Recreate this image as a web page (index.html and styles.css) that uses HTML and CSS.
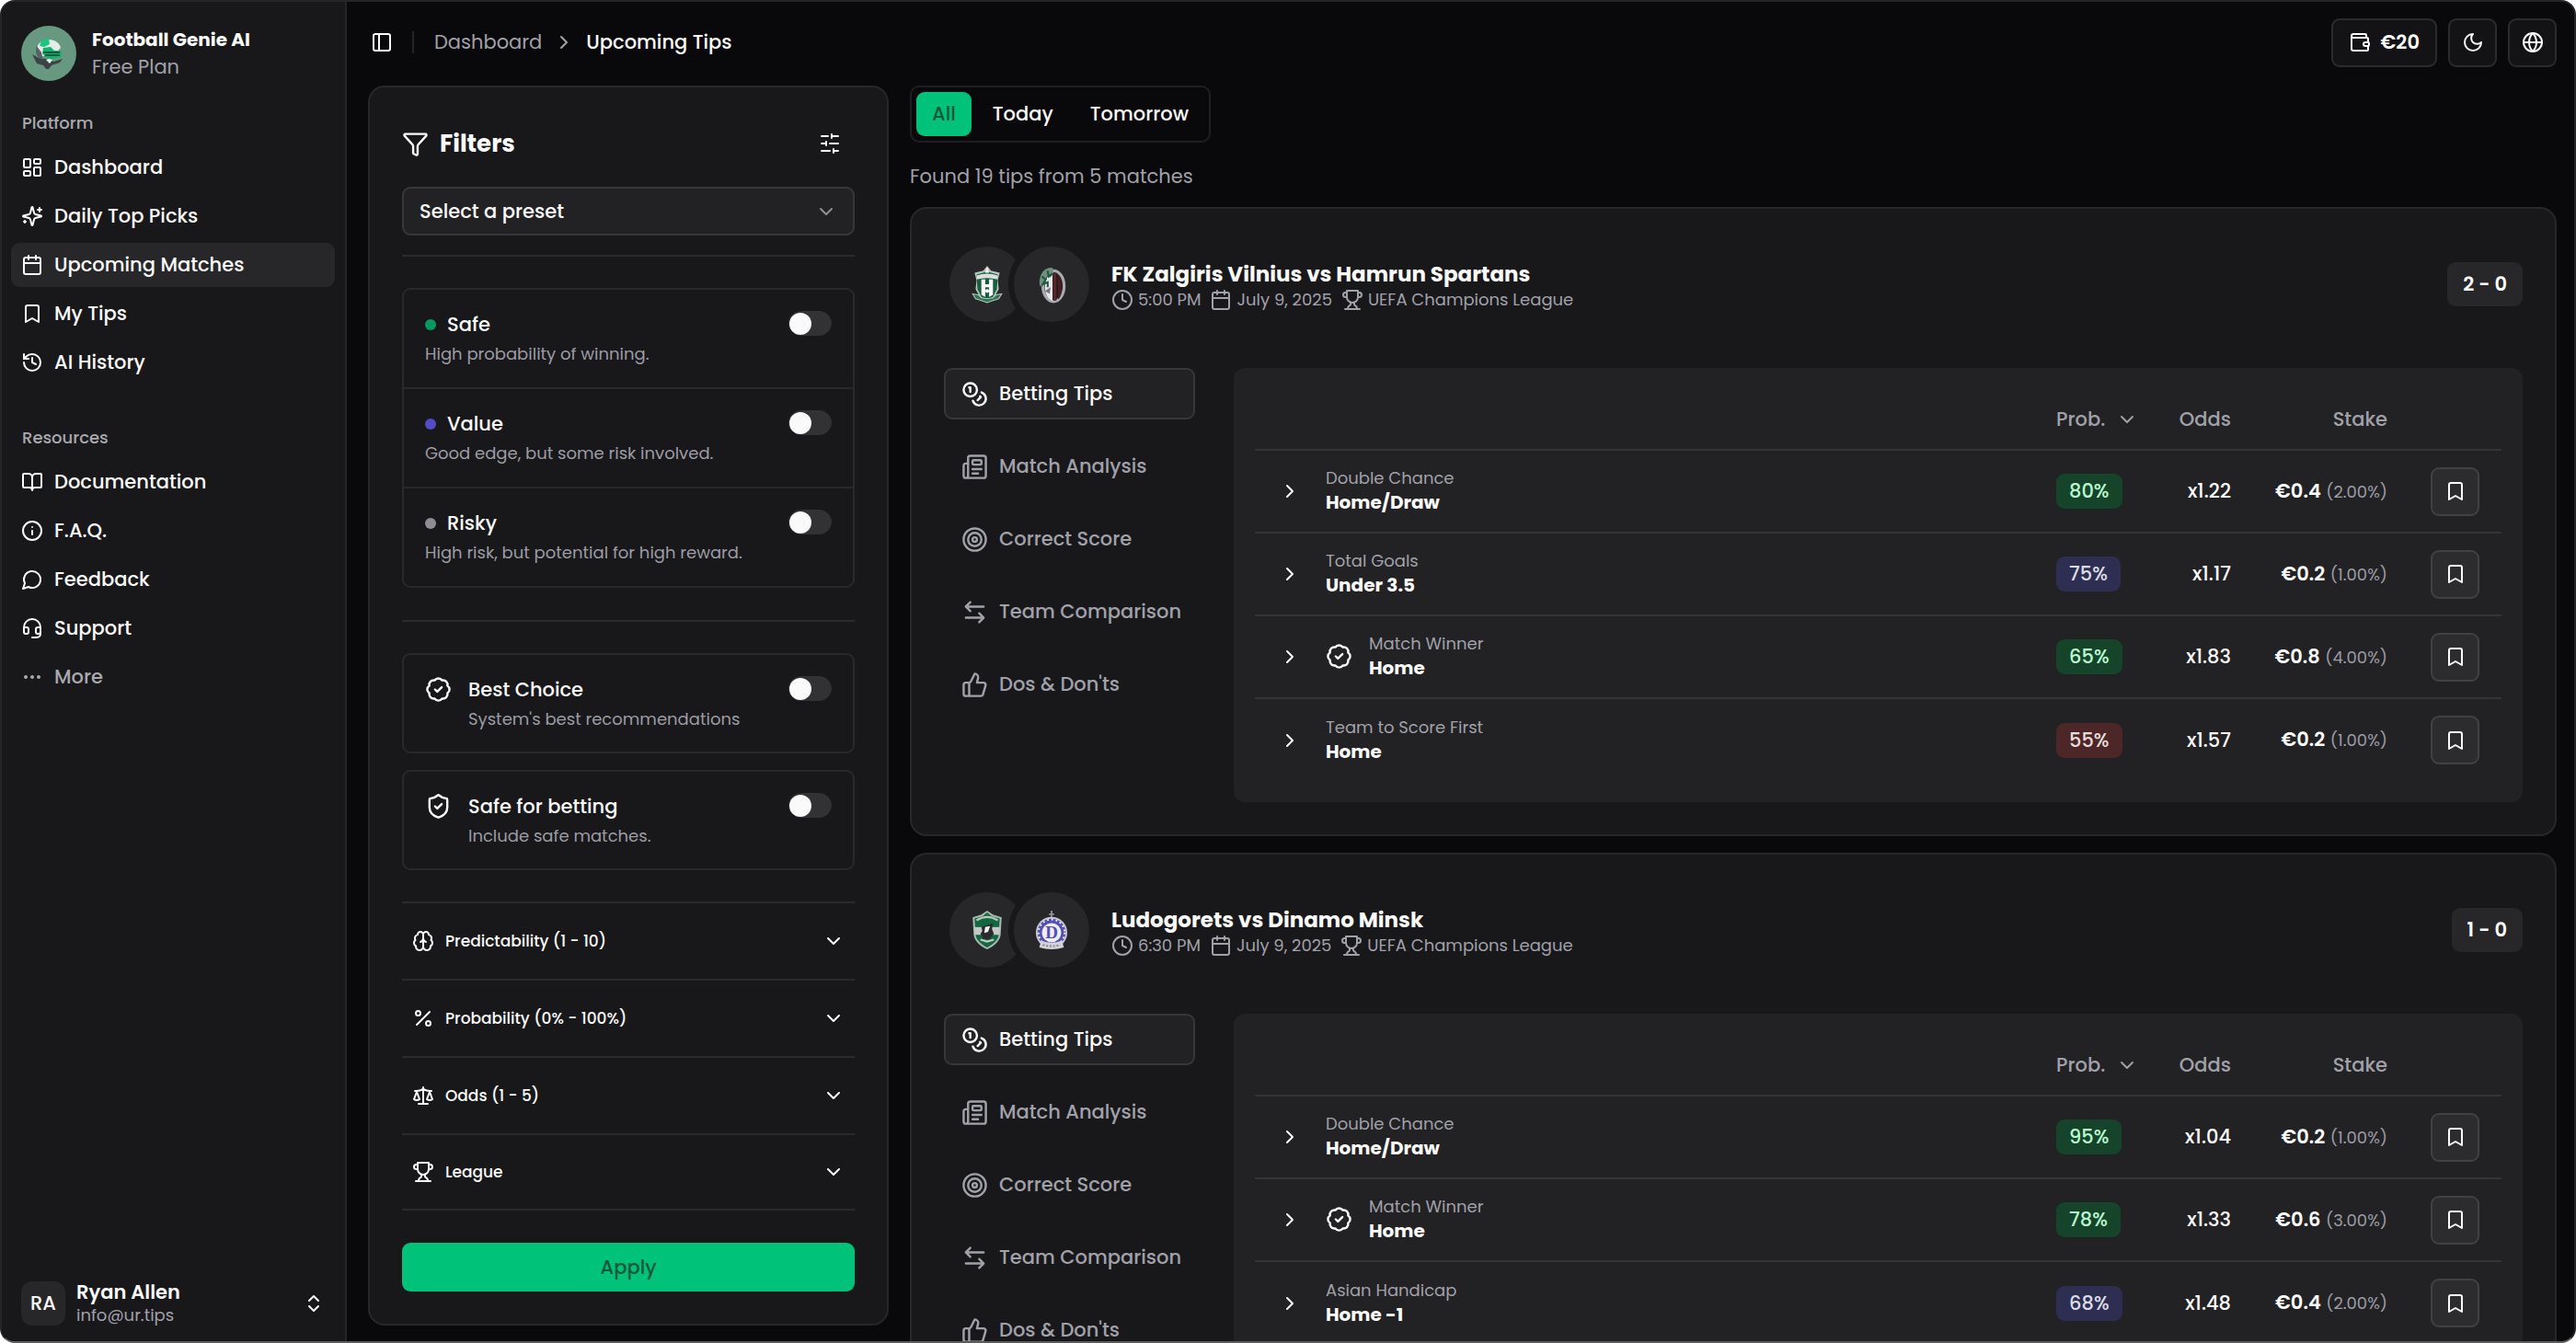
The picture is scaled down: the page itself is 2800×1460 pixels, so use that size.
FILE: index.html
```html
<!DOCTYPE html>
<html lang="en">
<head>
  <meta charset="UTF-8">
  <meta name="viewport" content="width=device-width, initial-scale=1.0">
  <title>Upcoming Tips — Football Genie AI</title>
  <link rel="stylesheet" href="styles.css">
</head>
<body>
  <!-- icon sprite -->
  <svg class="sprite" aria-hidden="true">
    <symbol id="panel" viewBox="0 0 24 24"><rect x="3" y="3" width="18" height="18" rx="2"/><path d="M9 3v18"/></symbol>
    <symbol id="dashboard" viewBox="0 0 24 24"><rect x="3" y="3" width="7" height="9" rx="1"/><rect x="14" y="3" width="7" height="5" rx="1"/><rect x="14" y="12" width="7" height="9" rx="1"/><rect x="3" y="16" width="7" height="5" rx="1"/></symbol>
    <symbol id="sparkles" viewBox="0 0 24 24"><path d="M9.937 15.5A2 2 0 0 0 8.5 14.063l-6.135-1.582a.5.5 0 0 1 0-.962L8.5 9.936A2 2 0 0 0 9.937 8.5l1.582-6.135a.5.5 0 0 1 .963 0L14.063 8.5A2 2 0 0 0 15.5 9.937l6.135 1.581a.5.5 0 0 1 0 .964L15.5 14.063a2 2 0 0 0-1.437 1.437l-1.582 6.135a.5.5 0 0 1-.963 0z"/><path d="M20 3v4M22 5h-4M4 17v2M5 18H3"/></symbol>
    <symbol id="calendar" viewBox="0 0 24 24"><path d="M8 2v4M16 2v4M3 10h18"/><rect x="3" y="4" width="18" height="18" rx="2"/></symbol>
    <symbol id="bookmark" viewBox="0 0 24 24"><path d="m19 21-7-4-7 4V5a2 2 0 0 1 2-2h10a2 2 0 0 1 2 2v16z"/></symbol>
    <symbol id="history" viewBox="0 0 24 24"><path d="M3 12a9 9 0 1 0 9-9 9.75 9.75 0 0 0-6.74 2.74L3 8"/><path d="M3 3v5h5M12 7v5l4 2"/></symbol>
    <symbol id="book" viewBox="0 0 24 24"><path d="M12 7v14M3 18a1 1 0 0 1-1-1V4a1 1 0 0 1 1-1h5a4 4 0 0 1 4 4 4 4 0 0 1 4-4h5a1 1 0 0 1 1 1v13a1 1 0 0 1-1 1h-6a3 3 0 0 0-3 3 3 3 0 0 0-3-3z"/></symbol>
    <symbol id="info" viewBox="0 0 24 24"><circle cx="12" cy="12" r="10"/><path d="M12 16v-4M12 8h.01"/></symbol>
    <symbol id="message" viewBox="0 0 24 24"><path d="M7.9 20A9 9 0 1 0 4 16.1L2 22Z"/></symbol>
    <symbol id="headset" viewBox="0 0 24 24"><path d="M3 11h3a2 2 0 0 1 2 2v3a2 2 0 0 1-2 2H5a2 2 0 0 1-2-2v-5Zm0 0a9 9 0 1 1 18 0m0 0v5a2 2 0 0 1-2 2h-1a2 2 0 0 1-2-2v-3a2 2 0 0 1 2-2h3Z"/><path d="M21 16v2a4 4 0 0 1-4 4h-5"/></symbol>
    <symbol id="dots" viewBox="0 0 24 24"><circle cx="5" cy="12" r="1"/><circle cx="12" cy="12" r="1"/><circle cx="19" cy="12" r="1"/></symbol>
    <symbol id="updown" viewBox="0 0 24 24"><path d="m7 15 5 5 5-5M7 9l5-5 5 5"/></symbol>
    <symbol id="right" viewBox="0 0 24 24"><path d="m9 18 6-6-6-6"/></symbol>
    <symbol id="down" viewBox="0 0 24 24"><path d="m6 9 6 6 6-6"/></symbol>
    <symbol id="wallet" viewBox="0 0 24 24"><path d="M19 7V4a1 1 0 0 0-1-1H5a2 2 0 0 0 0 4h15a1 1 0 0 1 1 1v4h-3a2 2 0 0 0 0 4h3a1 1 0 0 0 1-1v-2a1 1 0 0 0-1-1"/><path d="M3 5v14a2 2 0 0 0 2 2h15a1 1 0 0 0 1-1v-4"/></symbol>
    <symbol id="moon" viewBox="0 0 24 24"><path d="M12 3a6 6 0 0 0 9 9 9 9 0 1 1-9-9Z"/></symbol>
    <symbol id="globe" viewBox="0 0 24 24"><circle cx="12" cy="12" r="10"/><path d="M12 2a14.5 14.5 0 0 0 0 20 14.5 14.5 0 0 0 0-20M2 12h20"/></symbol>
    <symbol id="funnel" viewBox="0 0 24 24"><path d="M10 20a1 1 0 0 0 .553.895l2 1A1 1 0 0 0 14 21v-7a2 2 0 0 1 .517-1.341L21.74 4.67A1 1 0 0 0 21 3H3a1 1 0 0 0-.742 1.67l7.225 7.989A2 2 0 0 1 10 14z"/></symbol>
    <symbol id="sliders" viewBox="0 0 24 24"><path d="M21 4h-7M10 4H3M21 12h-9M8 12H3M21 20h-5M12 20H3M14 2v4M8 10v4M16 18v4"/></symbol>
    <symbol id="badge" viewBox="0 0 24 24"><path d="M3.85 8.62a4 4 0 0 1 4.78-4.77 4 4 0 0 1 6.74 0 4 4 0 0 1 4.78 4.78 4 4 0 0 1 0 6.74 4 4 0 0 1-4.77 4.78 4 4 0 0 1-6.75 0 4 4 0 0 1-4.78-4.77 4 4 0 0 1 0-6.76Z"/><path d="m9 12 2 2 4-4"/></symbol>
    <symbol id="shield" viewBox="0 0 24 24"><path d="M20 13c0 5-3.5 7.5-7.66 8.95a1 1 0 0 1-.67-.01C7.5 20.5 4 18 4 13V6a1 1 0 0 1 1-1c2 0 4.5-1.2 6.24-2.72a1.17 1.17 0 0 1 1.52 0C14.51 3.81 17 5 19 5a1 1 0 0 1 1 1z"/><path d="m9 12 2 2 4-4"/></symbol>
    <symbol id="brain" viewBox="0 0 24 24"><path d="M12 5a3 3 0 1 0-5.997.125 4 4 0 0 0-2.526 5.77 4 4 0 0 0 .556 6.588A4 4 0 1 0 12 18Z"/><path d="M12 5a3 3 0 1 1 5.997.125 4 4 0 0 1 2.526 5.77 4 4 0 0 1-.556 6.588A4 4 0 1 1 12 18Z"/><path d="M15 13a4.5 4.5 0 0 1-3-4 4.5 4.5 0 0 1-3 4"/></symbol>
    <symbol id="percent" viewBox="0 0 24 24"><path d="M19 5 5 19"/><circle cx="6.5" cy="6.5" r="2.5"/><circle cx="17.5" cy="17.5" r="2.5"/></symbol>
    <symbol id="scale" viewBox="0 0 24 24"><path d="m16 16 3-8 3 8c-.87.65-1.92 1-3 1s-2.13-.35-3-1ZM2 16l3-8 3 8c-.87.65-1.92 1-3 1s-2.13-.35-3-1ZM7 21h10M12 3v18M3 7h2c2 0 5-1 7-2 2 1 5 2 7 2h2"/></symbol>
    <symbol id="trophy" viewBox="0 0 24 24"><path d="M6 9H4.5a2.5 2.5 0 0 1 0-5H6M18 9h1.5a2.5 2.5 0 0 0 0-5H18M4 22h16M10 14.66V17c0 .55-.47.98-.97 1.21C7.85 18.75 7 20.24 7 22M14 14.66V17c0 .55.47.98.97 1.21C16.15 18.75 17 20.24 17 22M18 2H6v7a6 6 0 0 0 12 0V2Z"/></symbol>
    <symbol id="clock" viewBox="0 0 24 24"><circle cx="12" cy="12" r="10"/><path d="M12 6v6l4 2"/></symbol>
    <symbol id="coins" viewBox="0 0 24 24"><circle cx="8" cy="8" r="6"/><path d="M18.09 10.37A6 6 0 1 1 10.34 18M7 6h1v4M16.71 13.88l.7.71-2.82 2.82"/></symbol>
    <symbol id="news" viewBox="0 0 24 24"><path d="M15 18h-5M18 14h-8M4 22h16a2 2 0 0 0 2-2V4a2 2 0 0 0-2-2H8a2 2 0 0 0-2 2v16a2 2 0 0 1-4 0v-9a2 2 0 0 1 2-2h2"/><rect x="10" y="6" width="8" height="4" rx="1"/></symbol>
    <symbol id="target" viewBox="0 0 24 24"><circle cx="12" cy="12" r="10"/><circle cx="12" cy="12" r="6"/><circle cx="12" cy="12" r="2"/></symbol>
    <symbol id="compare" viewBox="0 0 24 24"><path d="M8 3 4 7l4 4M4 7h16M16 21l4-4-4-4M20 17H4"/></symbol>
    <symbol id="thumb" viewBox="0 0 24 24"><path d="M7 10v12M15 5.88 14 10h5.83a2 2 0 0 1 1.92 2.56l-2.33 8A2 2 0 0 1 17.5 22H4a2 2 0 0 1-2-2v-8a2 2 0 0 1 2-2h2.76a2 2 0 0 0 1.79-1.11L12 2a3.13 3.13 0 0 1 3 3.88Z"/></symbol>
  </svg>

  <div class="app">
    <aside class="sidebar">
      <div class="brand">
        <svg class="brand-logo" viewBox="0 0 60 60" aria-hidden="true">
          <circle cx="30" cy="30" r="30" fill="#679880"/>
          <path d="M17 29c-1-9 5-14 13-14 7 0 12 4 13 9l-3 3H27l-2 6-6 1z" fill="#e7ebea"/>
          <path d="M22 16l8-2 1 6-6 3-5-1z" fill="#18c97d"/>
          <path d="M24 24l8-1 4 4 8 1v6l-9 2-8-1-4-5z" fill="#0fb56e"/>
          <path d="M12 31l7 4 8 1 8 3 10-3-3 4-9 3-3 4h-3l-3-4-7-2z" fill="#3c4246"/>
          <path d="M17 22c-2 5-1 9 2 13l5 2-2-8z" fill="#596266"/>
          <path d="M24 29h18M26 32h16" stroke="#1d3a31" stroke-width="1.5"/>
          <path d="M27 37l3-1 4 1-3 4z" fill="#f1f3f2"/>
        </svg>
        <div class="brand-text">
          <span class="brand-name">Football Genie AI</span>
          <span class="brand-plan">Free Plan</span>
        </div>
      </div>

      <nav class="nav">
        <h2 class="nav-title">Platform</h2>
        <a class="nav-item" href="#"><svg class="icon"><use href="#dashboard"/></svg>Dashboard</a>
        <a class="nav-item" href="#"><svg class="icon"><use href="#sparkles"/></svg>Daily Top Picks</a>
        <a class="nav-item active" href="#"><svg class="icon"><use href="#calendar"/></svg>Upcoming Matches</a>
        <a class="nav-item" href="#"><svg class="icon"><use href="#bookmark"/></svg>My Tips</a>
        <a class="nav-item" href="#"><svg class="icon"><use href="#history"/></svg>AI History</a>
      </nav>

      <nav class="nav">
        <h2 class="nav-title">Resources</h2>
        <a class="nav-item" href="#"><svg class="icon"><use href="#book"/></svg>Documentation</a>
        <a class="nav-item" href="#"><svg class="icon"><use href="#info"/></svg>F.A.Q.</a>
        <a class="nav-item" href="#"><svg class="icon"><use href="#message"/></svg>Feedback</a>
        <a class="nav-item" href="#"><svg class="icon"><use href="#headset"/></svg>Support</a>
        <button class="nav-item muted" type="button"><svg class="icon"><use href="#dots"/></svg>More</button>
      </nav>

      <button class="user" type="button">
        <span class="user-avatar">RA</span>
        <span class="user-text">
          <span class="user-name">Ryan Allen</span>
          <span class="user-mail">info@ur.tips</span>
        </span>
        <svg class="icon"><use href="#updown"/></svg>
      </button>
    </aside>

    <main class="main">
      <header class="topbar">
        <button class="ghost" type="button" aria-label="Toggle sidebar"><svg class="icon"><use href="#panel"/></svg></button>
        <span class="topbar-sep"></span>
        <nav class="crumbs" aria-label="Breadcrumb">
          <a href="#">Dashboard</a>
          <svg class="icon"><use href="#right"/></svg>
          <span class="crumb-current">Upcoming Tips</span>
        </nav>
        <div class="topbar-actions">
          <button class="outline wallet" type="button"><svg class="icon"><use href="#wallet"/></svg>€20</button>
          <button class="outline square" type="button" aria-label="Theme"><svg class="icon"><use href="#moon"/></svg></button>
          <button class="outline square" type="button" aria-label="Language"><svg class="icon"><use href="#globe"/></svg></button>
        </div>
      </header>

      <div class="content">
        <form class="filters">
          <div class="filters-head">
            <svg class="icon-lg"><use href="#funnel"/></svg>
            <h1>Filters</h1>
            <button class="ghost" type="button" aria-label="Manage presets"><svg class="icon"><use href="#sliders"/></svg></button>
          </div>
          <div class="preset">
            <select aria-label="Preset">
              <option>Select a preset</option>
            </select>
            <svg class="icon"><use href="#down"/></svg>
          </div>
          <hr>
          <div class="box">
            <div class="option">
              <label for="safe"><span class="option-title"><i class="dot dot-safe"></i>Safe</span><small>High probability of winning.</small></label>
              <input class="switch" type="checkbox" id="safe">
            </div>
            <div class="option">
              <label for="value"><span class="option-title"><i class="dot dot-value"></i>Value</span><small>Good edge, but some risk involved.</small></label>
              <input class="switch" type="checkbox" id="value">
            </div>
            <div class="option">
              <label for="risky"><span class="option-title"><i class="dot dot-risky"></i>Risky</span><small>High risk, but potential for high reward.</small></label>
              <input class="switch" type="checkbox" id="risky">
            </div>
          </div>
          <hr>
          <div class="boxes">
            <div class="box">
              <div class="option">
                <svg class="icon-lg"><use href="#badge"/></svg>
                <label for="best"><span class="option-title">Best Choice</span><small>System's best recommendations</small></label>
                <input class="switch" type="checkbox" id="best">
              </div>
            </div>
            <div class="box">
              <div class="option">
                <svg class="icon-lg"><use href="#shield"/></svg>
                <label for="safebet"><span class="option-title">Safe for betting</span><small>Include safe matches.</small></label>
                <input class="switch" type="checkbox" id="safebet">
              </div>
            </div>
          </div>
          <div class="accordion">
            <button type="button"><svg class="icon"><use href="#brain"/></svg>Predictability (1 - 10)<svg class="icon caret"><use href="#down"/></svg></button>
            <button type="button"><svg class="icon"><use href="#percent"/></svg>Probability (0% - 100%)<svg class="icon caret"><use href="#down"/></svg></button>
            <button type="button"><svg class="icon"><use href="#scale"/></svg>Odds (1 - 5)<svg class="icon caret"><use href="#down"/></svg></button>
            <button type="button"><svg class="icon"><use href="#trophy"/></svg>League<svg class="icon caret"><use href="#down"/></svg></button>
          </div>
          <button class="apply" type="submit">Apply</button>
        </form>

        <section class="results">
          <div class="days">
            <button class="day active" type="button">All</button>
            <button class="day" type="button">Today</button>
            <button class="day" type="button">Tomorrow</button>
          </div>
          <p class="found">Found 19 tips from 5 matches</p>

          <article class="match">
            <header class="match-head">
              <div class="teams">
                <span class="team">
                  <svg viewBox="0 0 32 40" aria-hidden="true">
                    <path d="M16 1l4 5 9 2-2 8 1 9-5 9-7 5-7-5-5-9 1-9-2-8 9-2z" fill="#b9c4c0"/>
                    <path d="M16 7l11 3-1 15-4 8-6 4-6-4-4-8L5 10z" fill="#15603c"/>
                    <path d="M5 11q11-4 22 0v4q-11-3-22 0z" fill="#d9e0dd"/>
                    <path d="M16 2l2 6h-4z" fill="#fff"/>
                    <path d="M10 15h4v18l-4-2zM18 15h4v16l-4 2zM14 20h4v3h-4z" fill="#fff"/>
                    <circle cx="16" cy="27" r="2" fill="#fff"/>
                    <path d="M1 30l6 1 3 3 6 1 6-1 3-3 6-1-3 5-6 2-6 2-6-2-6-2z" fill="#2d7452" stroke="#b9c4c0"/>
                  </svg>
                </span>
                <span class="team">
                  <svg viewBox="0 0 32 40" aria-hidden="true">
                    <ellipse cx="18" cy="22" rx="11" ry="16" fill="#1c1c1f" stroke="#aaaab0" stroke-width="3"/>
                    <path d="M17 8v29c-5-1-8-8-8-14 0-8 3-13 8-15z" fill="#e8e8ea"/>
                    <path d="M18 8h3v29h-3z" fill="#5d2427"/>
                    <path d="M22 9c5 4 7 20 1 27z" fill="#471d20"/>
                    <path d="M17 3C8 2 2 11 4 22l3 1c0-6 2-10 5-12l3 2 3-5z" fill="#6f8f80"/>
                    <path d="M6 12l4 3-3 5 5-2v5M12 6l1 6 4-3" stroke="#1f5a3d" stroke-width="2" fill="none"/>
                    <path d="M9 27l6-4-1 7z" fill="#77777d"/>
                  </svg>
                </span>
              </div>
              <div class="match-info">
                <h2>FK Zalgiris Vilnius vs Hamrun Spartans</h2>
                <ul>
                  <li><svg class="icon"><use href="#clock"/></svg>5:00 PM</li>
                  <li><svg class="icon"><use href="#calendar"/></svg>July 9, 2025</li>
                  <li><svg class="icon"><use href="#trophy"/></svg>UEFA Champions League</li>
                </ul>
              </div>
              <span class="score">2 - 0</span>
            </header>
            <div class="match-body">
              <div class="tabs">
                <button class="tab active" type="button"><svg class="icon-lg"><use href="#coins"/></svg>Betting Tips</button>
                <button class="tab" type="button"><svg class="icon-lg"><use href="#news"/></svg>Match Analysis</button>
                <button class="tab" type="button"><svg class="icon-lg"><use href="#target"/></svg>Correct Score</button>
                <button class="tab" type="button"><svg class="icon-lg"><use href="#compare"/></svg>Team Comparison</button>
                <button class="tab" type="button"><svg class="icon-lg"><use href="#thumb"/></svg>Dos &amp; Don'ts</button>
              </div>
              <div class="panel">
                <table class="tips">
                  <thead>
                    <tr>
                      <th class="c-open"></th>
                      <th class="c-name"></th>
                      <th class="c-prob"><button class="sort" type="button">Prob.<svg class="icon"><use href="#down"/></svg></button></th>
                      <th class="c-odds">Odds</th>
                      <th class="c-stake">Stake</th>
                      <th class="c-save"></th>
                    </tr>
                  </thead>
                  <tbody>
                    <tr>
                      <td class="c-open"><button class="ghost" type="button" aria-label="Expand"><svg class="icon"><use href="#right"/></svg></button></td>
                      <td class="c-name"><div class="tip"><div><span>Double Chance</span><strong>Home/Draw</strong></div></div></td>
                      <td><span class="prob prob-high">80%</span></td>
                      <td class="c-odds">x1.22</td>
                      <td class="c-stake"><b>€0.4</b> <small>(2.00%)</small></td>
                      <td class="c-save"><button class="save" type="button" aria-label="Save tip"><svg class="icon"><use href="#bookmark"/></svg></button></td>
                    </tr>
                    <tr>
                      <td class="c-open"><button class="ghost" type="button" aria-label="Expand"><svg class="icon"><use href="#right"/></svg></button></td>
                      <td class="c-name"><div class="tip"><div><span>Total Goals</span><strong>Under 3.5</strong></div></div></td>
                      <td><span class="prob prob-mid">75%</span></td>
                      <td class="c-odds">x1.17</td>
                      <td class="c-stake"><b>€0.2</b> <small>(1.00%)</small></td>
                      <td class="c-save"><button class="save" type="button" aria-label="Save tip"><svg class="icon"><use href="#bookmark"/></svg></button></td>
                    </tr>
                    <tr>
                      <td class="c-open"><button class="ghost" type="button" aria-label="Expand"><svg class="icon"><use href="#right"/></svg></button></td>
                      <td class="c-name"><div class="tip"><svg class="icon-lg"><use href="#badge"/></svg><div><span>Match Winner</span><strong>Home</strong></div></div></td>
                      <td><span class="prob prob-high">65%</span></td>
                      <td class="c-odds">x1.83</td>
                      <td class="c-stake"><b>€0.8</b> <small>(4.00%)</small></td>
                      <td class="c-save"><button class="save" type="button" aria-label="Save tip"><svg class="icon"><use href="#bookmark"/></svg></button></td>
                    </tr>
                    <tr>
                      <td class="c-open"><button class="ghost" type="button" aria-label="Expand"><svg class="icon"><use href="#right"/></svg></button></td>
                      <td class="c-name"><div class="tip"><div><span>Team to Score First</span><strong>Home</strong></div></div></td>
                      <td><span class="prob prob-low">55%</span></td>
                      <td class="c-odds">x1.57</td>
                      <td class="c-stake"><b>€0.2</b> <small>(1.00%)</small></td>
                      <td class="c-save"><button class="save" type="button" aria-label="Save tip"><svg class="icon"><use href="#bookmark"/></svg></button></td>
                    </tr>
                  </tbody>
                </table>
              </div>
            </div>
          </article>

          <article class="match">
            <header class="match-head">
              <div class="teams">
                <span class="team">
                  <svg viewBox="0 0 32 40" aria-hidden="true">
                    <path d="M16 0l6 4 9 3-1 17c0 7-7 13-14 16C9 37 2 31 2 24L1 7l9-3z" fill="#a9b8b0"/>
                    <path d="M16 2l5 4 8 2-1 16c0 6-6 11-12 14C10 35 4 30 4 24L3 8l8-2z" fill="#13683f"/>
                    <path d="M5 10q11-7 22 0" stroke="#b8c8bf" stroke-width="2" fill="none"/>
                    <path d="M3 17h26v8H3z" fill="#c4c8c6"/>
                    <path d="M10 17l6-2 6-2-1 6 2 5-5 6-6-1-3-5 2-3z" fill="#2b2b2f"/>
                    <path d="M14 17l5-1-2 6-4 1z" fill="#f4f4f5"/>
                    <path d="M9 30l7 2 7-2" stroke="#c4c8c6" stroke-width="2" fill="none"/>
                  </svg>
                </span>
                <span class="team">
                  <svg viewBox="0 0 40 44" aria-hidden="true">
                    <path d="M20 0v9M17 4h6" stroke="#8e8e96" stroke-width="2"/>
                    <circle cx="20" cy="25" r="17" fill="#5350b8" stroke="#c5c5d2" stroke-width="2"/>
                    <circle cx="20" cy="25" r="15" fill="none" stroke="#f1f1f8" stroke-width="2" stroke-dasharray="2 3"/>
                    <circle cx="20" cy="25" r="11" fill="#eeeef6"/>
                    <text x="20" y="32" text-anchor="middle" class="crest-letter">D</text>
                    <path d="M8 34q12 5 24 0l2 8q-14 4-28 0z" fill="#d3d3d8"/>
                    <path d="M10 39q10 3 20 0" stroke="#85858e" stroke-width="2" stroke-dasharray="2 2" fill="none"/>
                  </svg>
                </span>
              </div>
              <div class="match-info">
                <h2>Ludogorets vs Dinamo Minsk</h2>
                <ul>
                  <li><svg class="icon"><use href="#clock"/></svg>6:30 PM</li>
                  <li><svg class="icon"><use href="#calendar"/></svg>July 9, 2025</li>
                  <li><svg class="icon"><use href="#trophy"/></svg>UEFA Champions League</li>
                </ul>
              </div>
              <span class="score">1 - 0</span>
            </header>
            <div class="match-body">
              <div class="tabs">
                <button class="tab active" type="button"><svg class="icon-lg"><use href="#coins"/></svg>Betting Tips</button>
                <button class="tab" type="button"><svg class="icon-lg"><use href="#news"/></svg>Match Analysis</button>
                <button class="tab" type="button"><svg class="icon-lg"><use href="#target"/></svg>Correct Score</button>
                <button class="tab" type="button"><svg class="icon-lg"><use href="#compare"/></svg>Team Comparison</button>
                <button class="tab" type="button"><svg class="icon-lg"><use href="#thumb"/></svg>Dos &amp; Don'ts</button>
              </div>
              <div class="panel">
                <table class="tips">
                  <thead>
                    <tr>
                      <th class="c-open"></th>
                      <th class="c-name"></th>
                      <th class="c-prob"><button class="sort" type="button">Prob.<svg class="icon"><use href="#down"/></svg></button></th>
                      <th class="c-odds">Odds</th>
                      <th class="c-stake">Stake</th>
                      <th class="c-save"></th>
                    </tr>
                  </thead>
                  <tbody>
                    <tr>
                      <td class="c-open"><button class="ghost" type="button" aria-label="Expand"><svg class="icon"><use href="#right"/></svg></button></td>
                      <td class="c-name"><div class="tip"><div><span>Double Chance</span><strong>Home/Draw</strong></div></div></td>
                      <td><span class="prob prob-high">95%</span></td>
                      <td class="c-odds">x1.04</td>
                      <td class="c-stake"><b>€0.2</b> <small>(1.00%)</small></td>
                      <td class="c-save"><button class="save" type="button" aria-label="Save tip"><svg class="icon"><use href="#bookmark"/></svg></button></td>
                    </tr>
                    <tr>
                      <td class="c-open"><button class="ghost" type="button" aria-label="Expand"><svg class="icon"><use href="#right"/></svg></button></td>
                      <td class="c-name"><div class="tip"><svg class="icon-lg"><use href="#badge"/></svg><div><span>Match Winner</span><strong>Home</strong></div></div></td>
                      <td><span class="prob prob-high">78%</span></td>
                      <td class="c-odds">x1.33</td>
                      <td class="c-stake"><b>€0.6</b> <small>(3.00%)</small></td>
                      <td class="c-save"><button class="save" type="button" aria-label="Save tip"><svg class="icon"><use href="#bookmark"/></svg></button></td>
                    </tr>
                    <tr>
                      <td class="c-open"><button class="ghost" type="button" aria-label="Expand"><svg class="icon"><use href="#right"/></svg></button></td>
                      <td class="c-name"><div class="tip"><div><span>Asian Handicap</span><strong>Home -1</strong></div></div></td>
                      <td><span class="prob prob-mid">68%</span></td>
                      <td class="c-odds">x1.48</td>
                      <td class="c-stake"><b>€0.4</b> <small>(2.00%)</small></td>
                      <td class="c-save"><button class="save" type="button" aria-label="Save tip"><svg class="icon"><use href="#bookmark"/></svg></button></td>
                    </tr>
                  </tbody>
                </table>
              </div>
            </div>
          </article>
        </section>
      </div>
    </main>
  </div>
</body>
</html>
```

FILE: styles.css
```css
* {
  box-sizing: border-box;
}
html {
  background: #fff;
}
body {
  margin: 0;
  font-family: Poppins, Inter, "Open Sans", sans-serif;
  font-size: 21px;
  font-weight: 500;
  line-height: 30px;
  color: #fafafa;
}
h1, h2, p, ul {
  margin: 0;
  padding: 0;
}
a {
  color: inherit;
  text-decoration: none;
}
button, select {
  font: inherit;
  color: inherit;
  background: none;
  border: none;
  padding: 0;
  cursor: pointer;
}
hr {
  width: 100%;
  margin: 0;
  border: none;
  border-top: 2px solid #2b2b2e;
}
small {
  font-size: 18px;
  font-weight: 400;
  color: #9c9ca5;
}
.sprite {
  display: none;
}
.icon, .icon-lg {
  flex: none;
  display: block;
  width: 24px;
  height: 24px;
  fill: none;
  stroke: currentColor;
  stroke-width: 2;
  stroke-linecap: round;
  stroke-linejoin: round;
}
.icon-lg {
  width: 29px;
  height: 29px;
}
.ghost {
  display: flex;
}

.app {
  display: flex;
  height: 100vh;
  overflow: hidden;
  background: #09090b;
  border: 2px solid #252528;
  border-bottom-color: #5c5c5e;
  border-radius: 16px;
}

/* sidebar */
.sidebar {
  flex: none;
  display: flex;
  flex-direction: column;
  width: 375px;
  padding: 26px 11px 16px 10px;
  background: #18181b;
  border-right: 2px solid #252528;
}
.brand {
  display: flex;
  align-items: center;
  gap: 17px;
  padding: 0 11px;
  margin-bottom: 31px;
}
.brand-logo {
  width: 60px;
  height: 60px;
}
.brand-text, .user-text {
  display: flex;
  flex-direction: column;
}
.brand-name {
  font-size: 20px;
  font-weight: 700;
}
.brand-plan {
  font-weight: 400;
  color: #a1a1aa;
}
.nav {
  display: flex;
  flex-direction: column;
  gap: 5px;
  margin-bottom: 43px;
}
.nav-title {
  padding: 0 12px;
  margin-bottom: 4px;
  font-size: 18px;
  font-weight: 500;
  color: #a9a9ae;
}
.nav-item {
  display: flex;
  align-items: center;
  gap: 12px;
  height: 48px;
  padding: 0 11px;
  border-radius: 9px;
}
.nav-item.active {
  background: #27272a;
}
.nav-item.muted {
  color: #a9a9ae;
}
.user {
  display: flex;
  align-items: center;
  gap: 12px;
  margin-top: auto;
  padding: 0 11px;
  text-align: left;
}
.user-avatar {
  display: grid;
  place-items: center;
  width: 48px;
  height: 48px;
  border-radius: 12px;
  background: #27272a;
}
.user-name {
  font-weight: 600;
  line-height: 26px;
}
.user-mail {
  font-size: 18px;
  font-weight: 400;
  line-height: 24px;
  color: #a1a1aa;
}
.user .icon {
  margin-left: auto;
}

/* top bar */
.main {
  flex: 1;
  min-width: 0;
  padding: 17px 19px 0 23px;
}
.topbar {
  display: flex;
  align-items: center;
  height: 54px;
}
.topbar > .ghost {
  padding: 0 3px;
}
.topbar-sep {
  width: 2px;
  height: 24px;
  margin: 0 22px 0 18px;
  background: #252528;
}
.crumbs {
  display: flex;
  align-items: center;
  gap: 12px;
}
.crumbs a, .crumbs .icon {
  color: #a1a1aa;
}
.crumbs a {
  font-weight: 400;
}
.topbar-actions {
  display: flex;
  gap: 12px;
  margin-left: auto;
}
.outline {
  display: flex;
  align-items: center;
  justify-content: center;
  gap: 11px;
  height: 53px;
  background: #131315;
  border: 2px solid #2b2b2e;
  border-radius: 9px;
}
.outline.wallet {
  padding: 0 17px;
  font-weight: 600;
}
.outline.square {
  width: 53px;
}

.content {
  display: flex;
  align-items: flex-start;
  gap: 23px;
  padding-top: 20px;
}

/* filters */
.filters {
  flex: none;
  display: flex;
  flex-direction: column;
  width: 566px;
  padding: 40px 35px 35px;
  background: #18181b;
  border: 2px solid #27272a;
  border-radius: 18px;
}
.filters-head {
  display: flex;
  align-items: center;
  gap: 12px;
  height: 42px;
  margin-bottom: 26px;
}
.filters-head h1 {
  font-size: 26px;
  font-weight: 700;
}
.filters-head .ghost {
  margin-left: auto;
  padding-right: 15px;
}
.preset {
  display: grid;
  align-items: center;
  margin-bottom: 21px;
}
.preset select, .preset .icon {
  grid-area: 1 / 1;
}
.preset select {
  appearance: none;
  height: 53px;
  padding: 0 17px;
  background: #222225;
  border: 2px solid #37373a;
  border-radius: 9px;
}
.preset .icon {
  justify-self: end;
  margin-right: 19px;
  color: #8f8f98;
  pointer-events: none;
}
.box {
  border: 2px solid #29292c;
  border-radius: 9px;
}
.filters > .box {
  margin: 34px 0 35px;
}
.boxes {
  display: flex;
  flex-direction: column;
  gap: 18px;
  margin: 34px 0;
}
.option {
  display: flex;
  align-items: flex-start;
  gap: 18px;
  padding: 23px 23px 22px;
}
.option + .option {
  border-top: 2px solid #29292c;
}
.option label {
  flex: 1;
  display: flex;
  flex-direction: column;
  gap: 3px;
}
.option-title {
  display: flex;
  align-items: center;
  gap: 12px;
  line-height: 30px;
}
.option small {
  line-height: 28px;
}
.boxes .option {
  padding-bottom: 21px;
}
.dot {
  width: 12px;
  height: 12px;
  border-radius: 50%;
}
.dot-safe {
  background: #069a5f;
}
.dot-value {
  background: #524cc9;
}
.dot-risky {
  background: #918c94;
}
.switch {
  appearance: none;
  display: flex;
  align-items: center;
  width: 47px;
  height: 27px;
  margin: 0;
  border: 1px solid #323235;
  border-radius: 14px;
  background: #323235;
  cursor: pointer;
}
.switch::before {
  content: "";
  width: 24px;
  height: 24px;
  border-radius: 50%;
  background: #fafafa;
}
.switch:checked {
  justify-content: flex-end;
  background: #00c278;
}
.accordion {
  display: flex;
  flex-direction: column;
  margin-bottom: 35px;
  border-bottom: 2px solid #2b2b2e;
}
.accordion button {
  display: flex;
  align-items: center;
  gap: 12px;
  height: 84px;
  padding: 0 11px;
  font-size: 17px;
  border-top: 2px solid #2b2b2e;
}
.accordion button:last-child {
  height: 82px;
}
.accordion .caret {
  margin-left: auto;
}
.apply {
  height: 53px;
  border-radius: 9px;
  background: #00c278;
  color: #14573a;
}

/* results */
.results {
  flex: 1;
  min-width: 0;
}
.days {
  display: flex;
  gap: 6px;
  width: fit-content;
  padding: 5px;
  border: 2px solid #1f1f22;
  border-radius: 10px;
}
.day {
  height: 48px;
  padding: 0 17px;
  border-radius: 9px;
}
.day.active {
  background: #00c278;
  color: #14573a;
}
.found {
  margin: 22px 0 18px;
  font-weight: 400;
  color: #a1a1aa;
}
.match {
  margin-bottom: 18px;
  padding: 35px;
  background: #18181b;
  border: 2px solid #27272a;
  border-radius: 18px;
}
.match-head {
  display: flex;
  align-items: center;
  height: 94px;
  margin-bottom: 44px;
}
.teams {
  display: flex;
  align-items: center;
}
.team {
  display: grid;
  place-items: center;
  width: 94px;
  height: 94px;
  border: 6px solid #18181b;
  border-radius: 50%;
  background: #27272a;
}
.team + .team {
  margin-left: -24px;
}
.team svg {
  width: 38px;
  height: 42px;
}
.crest-letter {
  font-family: "Liberation Serif", serif;
  font-size: 20px;
  font-weight: 700;
  fill: #5350b8;
}
.match-info {
  margin-left: 18px;
  padding-top: 4px;
}
.match-info h2 {
  font-size: 23px;
  font-weight: 700;
  line-height: 30px;
}
.match-info ul {
  display: flex;
  gap: 10px;
  list-style: none;
  font-size: 18px;
  font-weight: 400;
  line-height: 26px;
  color: #a1a1aa;
}
.match-info li {
  display: flex;
  align-items: center;
  gap: 5px;
}
.score {
  display: grid;
  place-items: center;
  height: 48px;
  margin-left: auto;
  padding: 0 17px;
  border-radius: 9px;
  background: #27272a;
  font-weight: 600;
}
.match-body {
  display: flex;
  align-items: flex-start;
  gap: 42px;
}
.tabs {
  flex: none;
  display: flex;
  flex-direction: column;
  gap: 23px;
  width: 273px;
}
.tab {
  display: flex;
  align-items: center;
  gap: 12px;
  height: 56px;
  padding: 0 17px;
  border: 2px solid transparent;
  border-radius: 9px;
  color: #a1a1aa;
  white-space: nowrap;
}
.tab.active {
  background: #222225;
  border-color: #37373a;
  color: #fafafa;
}
.panel {
  flex: 1;
  min-width: 0;
  padding: 23px;
  border-radius: 12px;
  background: #222225;
}

/* tips table */
.tips {
  width: 100%;
  table-layout: fixed;
  border-collapse: collapse;
}
.tips th {
  height: 66px;
  padding: 0 18px;
  font-weight: 500;
  color: #a1a1aa;
  text-align: left;
}
.tips td {
  height: 90px;
  padding: 0 18px;
  border-top: 2px solid #343437;
}
.tips .c-open {
  width: 59px;
  padding: 0 0 0 26px;
}
.tips .c-prob {
  width: 129px;
  padding-right: 0;
}
.tips .c-odds {
  width: 97px;
  padding-left: 0;
  text-align: right;
}
.tips .c-stake {
  width: 170px;
  padding-left: 0;
  text-align: right;
  white-space: nowrap;
}
.tips .c-save {
  width: 106px;
  padding: 0 24px 0 0;
}
.sort {
  display: flex;
  align-items: center;
  gap: 12px;
}
.tip {
  display: flex;
  align-items: center;
  gap: 18px;
  padding-bottom: 2px;
}
.tip span, .tip strong {
  display: block;
  line-height: 27px;
}
.tip span {
  font-size: 18px;
  font-weight: 400;
  color: #a1a1aa;
}
.tip strong {
  font-size: 20px;
  font-weight: 700;
}
.prob {
  display: inline-block;
  height: 38px;
  padding: 0 14px;
  border-radius: 9px;
  line-height: 38px;
}
.prob-high {
  background: #16442a;
  color: #b9f8cf;
}
.prob-mid {
  background: #2d2e52;
  color: #dcdce6;
}
.prob-low {
  background: #4d2627;
  color: #e6dcdd;
}
.c-stake b {
  font-weight: 600;
}
.save {
  display: grid;
  place-items: center;
  width: 53px;
  height: 53px;
  margin-left: auto;
  border: 2px solid #414144;
  border-radius: 9px;
  background: #2c2c2f;
}
```
